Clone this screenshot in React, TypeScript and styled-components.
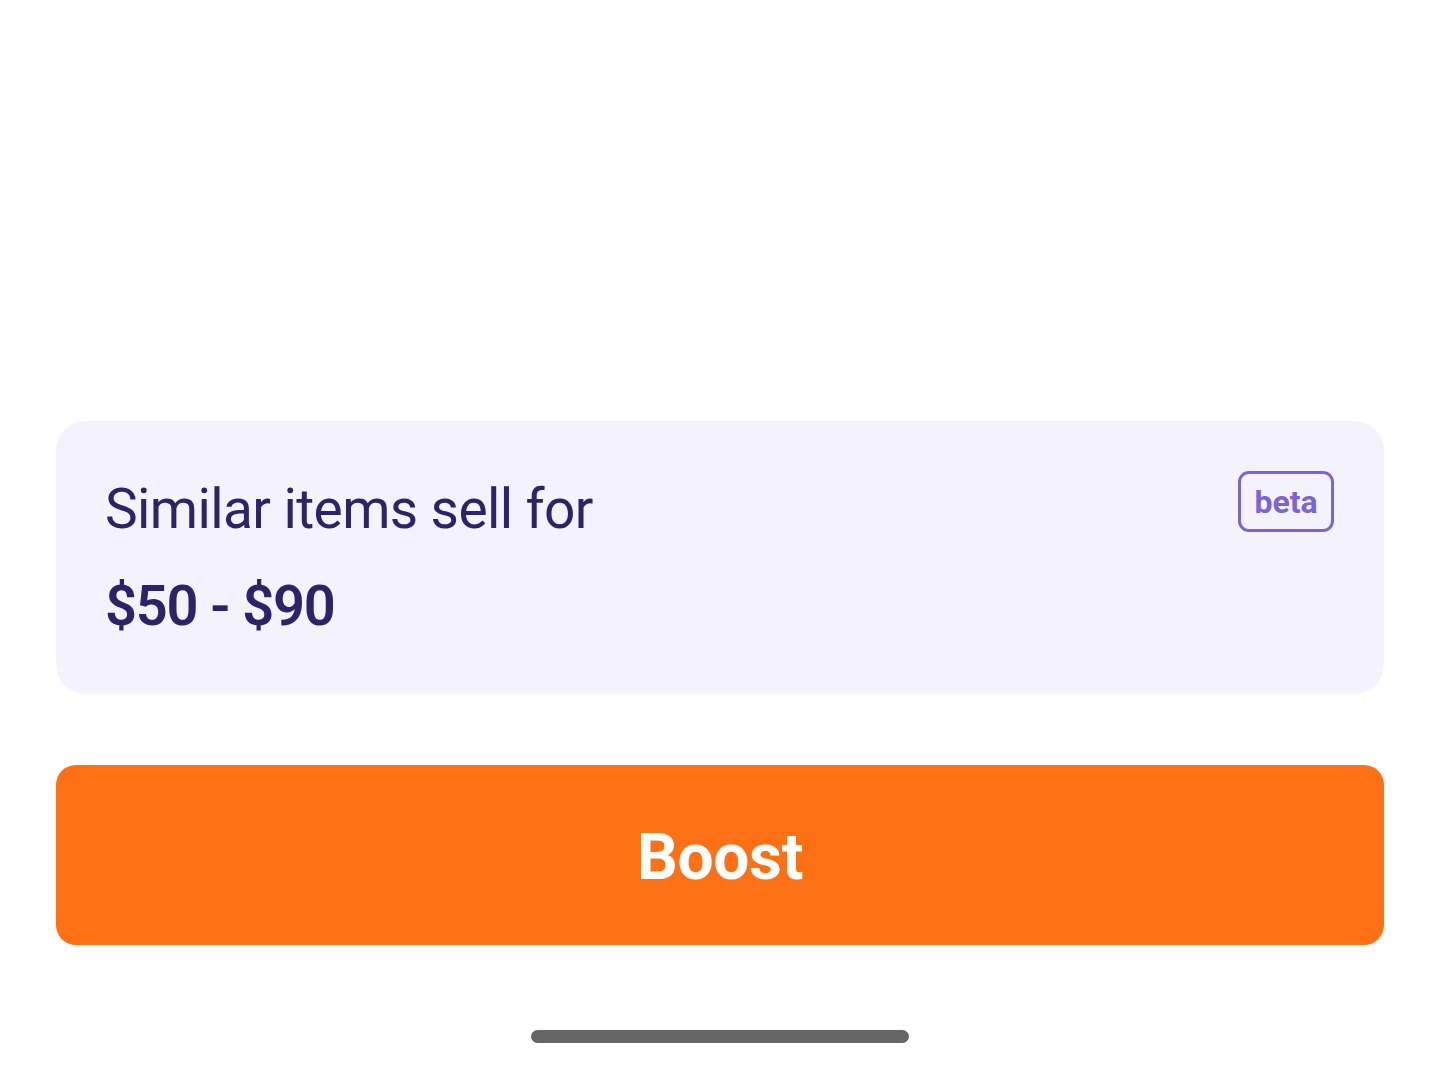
import { FC } from 'react';
import styled, { createGlobalStyle } from 'styled-components';

const GlobalStyle = createGlobalStyle`
    html, body {
        margin: 0;
        padding: 0;
        background: #ffffff;
        font-family: Roboto, "Liberation Sans", sans-serif;
    }
`;

const Screen = styled.div`
    width: 1440px;
    height: 1078px;
    box-sizing: border-box;
    padding: 0 56px 35px;
    display: flex;
    flex-direction: column;
    justify-content: flex-end;
`;

const PriceCard = styled.div`
    height: 273px;
    box-sizing: border-box;
    background: #f4f2fd;
    border-radius: 30px;
    padding: 50px 50px 0 49px;
    display: flex;
    justify-content: space-between;
    align-items: flex-start;
`;

const Texts = styled.div`
    display: flex;
    flex-direction: column;
`;

const Label = styled.span`
    font-size: 55px;
    line-height: 76px;
    color: #2e2268;
    letter-spacing: -0.6px;
`;

const Range = styled.span`
    margin-top: 27px;
    font-size: 56px;
    font-weight: 600;
    line-height: 64px;
    color: #2e2268;
    letter-spacing: -1.2px;
`;

const Badge = styled.span`
    box-sizing: border-box;
    width: 96px;
    height: 61px;
    border: 3px solid #7b63d8;
    border-radius: 11px;
    color: #7b63d8;
    font-size: 32px;
    font-weight: 700;
    display: flex;
    align-items: center;
    justify-content: center;
`;

const BoostButton = styled.button`
    margin-top: 71px;
    height: 180px;
    padding-top: 6px;
    border: none;
    border-radius: 20px;
    background: #fd7013;
    color: #ffffff;
    font-family: Roboto, "Liberation Sans", sans-serif;
    font-size: 64px;
    font-weight: 700;
    letter-spacing: -0.3px;
    cursor: pointer;
`;

const HomeBar = styled.div`
    align-self: center;
    margin-top: 85px;
    width: 378px;
    height: 13px;
    border-radius: 7px;
    background: #666666;
`;

const App: FC = () => {
    return (
        <>
            <GlobalStyle />
            <Screen>
                <PriceCard>
                    <Texts>
                        <Label>Similar items sell for</Label>
                        <Range>$50 - $90</Range>
                    </Texts>
                    <Badge>beta</Badge>
                </PriceCard>
                <BoostButton type="button">Boost</BoostButton>
                <HomeBar />
            </Screen>
        </>
    );
};

export default App;
